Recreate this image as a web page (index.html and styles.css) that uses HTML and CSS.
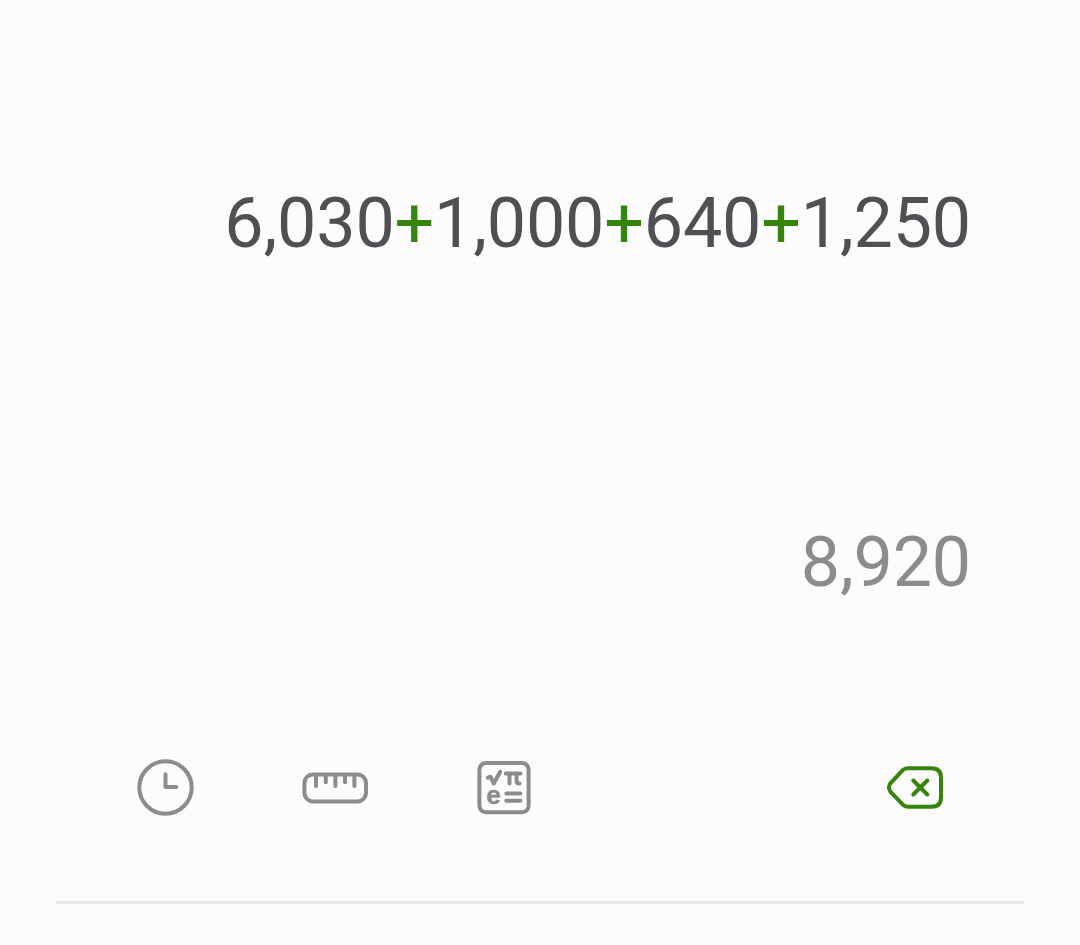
FILE: index.html
```
<!DOCTYPE html>
<html lang="en">
<head>
	<meta charset="UTF-8">
	<title>Calculator</title>
	<meta name="viewport" content="width=device-width, initial-scale=1.0">
	<link rel="stylesheet" href="styles.css">
</head>
<body>
	<div class="calculator">
		<div class="formula">6,030<span class="op">+</span>1,000<span class="op">+</span>640<span class="op">+</span>1,250</div>
		<div class="result">8,920</div>
		<div class="tools">
			<svg class="icon icon_history" width="70" height="76" viewBox="0 0 70 76">
				<circle cx="35.5" cy="37.5" r="26.2"/>
				<path d="M35.5 24.2V37.1H46.3"/>
			</svg>
			<svg class="icon icon_unit" width="80" height="76" viewBox="0 0 80 76">
				<rect x="9.4" y="24.4" width="61.6" height="27" rx="8.5"/>
				<path d="M21 25V36M30.8 25V32.2M40.4 25V36M50 25V32.2M59.4 25V36"/>
			</svg>
			<svg class="icon icon_science" width="68" height="76" viewBox="0 0 68 76">
				<rect x="9.4" y="13.1" width="49.2" height="49.2" rx="6.5"/>
				<path d="M18 27.7L20.4 26.7L23.8 33.5L30.2 21.8"/>
				<path d="M35.8 23.6H50.4M39.5 24V33.6M46.6 24V31.5Q46.6 33.6 49.6 33.4"/>
				<path d="M36.3 43.6H50.4M36.3 50.8H50.4"/>
				<text x="16.2" y="53.7">e</text>
			</svg>
			<svg class="icon icon_delete" width="70" height="76" viewBox="0 0 70 76">
				<path d="M27.5 18.2H51.5Q61 18.2 61 27.7V47.2Q61 56.7 51.5 56.7H27.5Q24.8 56.7 22.8 54.7L10.8 42.2Q7 37.5 10.8 32.8L22.8 20.2Q24.8 18.2 27.5 18.2Z"/>
				<path d="M33.3 30.5L47.3 44.5M47.3 30.5L33.3 44.5"/>
			</svg>
		</div>
		<div class="line"></div>
	</div>
</body>
</html>
```

FILE: styles.css
```
*{
	margin: 0;
	padding: 0;
	box-sizing: border-box;
}
body {
	background-color: #fcfcfc;
	font-family: Roboto, sans-serif;
}
.calculator {
	width: 1080px;
	height: 945px;
	padding-top: 182px;
	overflow: hidden;
}
.formula,
.result {
	height: 82px;
	padding-right: 109px;
	font-size: 70px;
	line-height: 82px;
	letter-spacing: -0.19px;
	text-align: right;
	white-space: nowrap;
}
.formula {
	color: #505054;
}
.formula .op {
	color: #35850d;
}
.result {
	margin-top: 257px;
	color: #8c8c8f;
}
.tools {
	display: flex;
	height: 76px;
	margin-top: 147px;
	padding: 0 130px;
}
.icon {
	flex: none;
	fill: none;
	stroke: #8c8c8f;
	stroke-width: 4;
	stroke-linecap: round;
	stroke-linejoin: round;
}
.icon_unit,
.icon_science {
	margin-left: 95px;
}
.icon_science text {
	fill: #8c8c8f;
	stroke: #8c8c8f;
	stroke-width: 0.4;
	font-family: "Liberation Sans", sans-serif;
	font-size: 26px;
	font-weight: 700;
}
.icon_delete {
	margin-left: auto;
	stroke: #35850d;
}
.line {
	height: 3px;
	margin: 75px 56px 0;
	background-color: #e8e8e8;
}
```
